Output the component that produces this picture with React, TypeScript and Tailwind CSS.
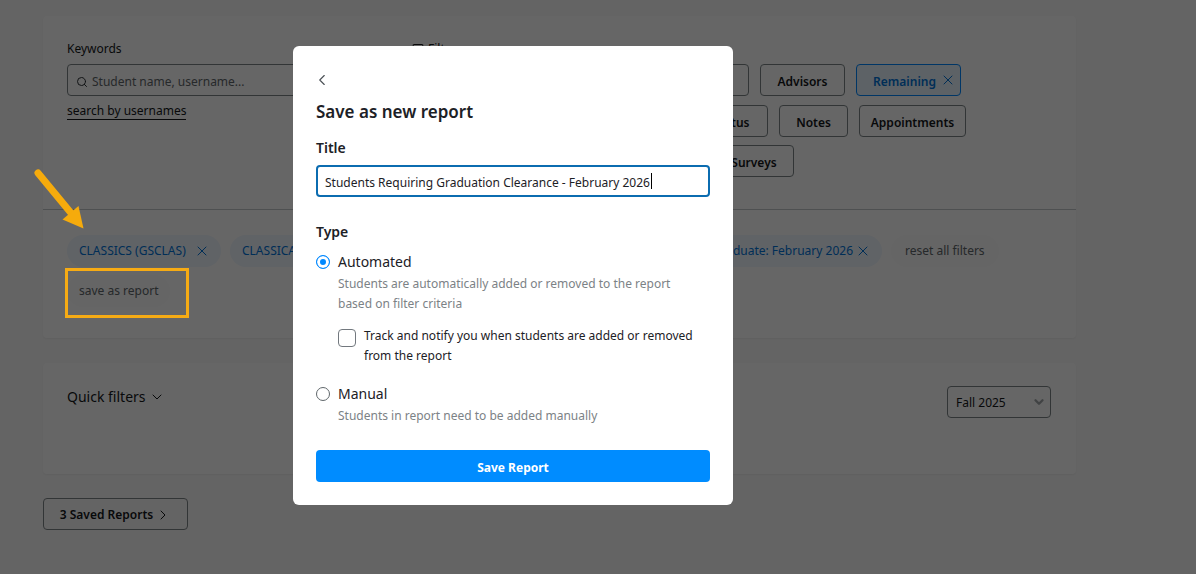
import { useState } from "react";
import { ChevronDown, ChevronLeft, ChevronRight, Filter, Search, X } from "lucide-react";

const filterButton =
  "flex h-8 shrink-0 items-center justify-center rounded border border-[#7d8588] bg-white px-4 pt-1 font-semibold text-[#14171a]";
const chip =
  "flex h-8 shrink-0 items-center gap-[2px] rounded-full bg-[#f0f7ff] pr-[11px] pl-3 whitespace-nowrap text-[#0074d9]";

const Filters = () => {
  return (
    <section className="rounded bg-white shadow-xs">
      <div className="flex h-[194px] gap-6 border-b border-[#c4c8ca] px-6 pt-[23px]">
        <div className="w-[321px] shrink-0">
          <label htmlFor="keywords" className="block leading-5">
            Keywords
          </label>
          <div className="mt-[5px] flex h-8 items-center gap-1 rounded border border-[#7d8588] px-2 pt-1">
            <Search className="size-3 shrink-0 text-[#2c3236]" />
            <input
              id="keywords"
              type="text"
              placeholder="Student name, username..."
              className="w-full bg-transparent outline-none placeholder:text-[#5f676b]"
            />
          </div>
          <a
            href="#usernames"
            className="mt-[7px] inline-block border-b border-[#14171a] leading-4"
          >
            search by usernames
          </a>
        </div>

        <div className="flex flex-col gap-2">
          <div className="-mb-[3px] flex items-center gap-1 leading-5">
            <Filter className="size-3" />
            Filters
          </div>
          <div className="flex gap-[11px] pl-[246px]">
            <button className={`${filterButton} w-[91px]`}>Courses</button>
            <button className={`${filterButton} w-[85px]`}>Advisors</button>
            <button className="flex h-8 w-[105px] items-center justify-center gap-1 rounded border border-[#0088ff] bg-[#e8f4ff] pl-3 font-semibold text-[#0074d9]">
              <span className="pt-1">Remaining</span>
              <X className="size-4" strokeWidth={1.5} />
            </button>
          </div>
          <div className="mt-px flex gap-[11px] pl-[282px]">
            <button className={`${filterButton} w-[74px]`}>Status</button>
            <button className={`${filterButton} w-[69px]`}>Notes</button>
            <button className={`${filterButton} w-[107px]`}>Appointments</button>
          </div>
          <div className="flex gap-[11px] pl-[302px]">
            <button className={`${filterButton} w-[80px]`}>Surveys</button>
          </div>
        </div>
      </div>

      <div className="flex flex-wrap gap-x-[9px] gap-y-2 px-6 pt-[25px] pb-[31px]">
        <button className={`${chip} w-[154px] justify-between`}>
          CLASSICS (GSCLAS)
          <X className="size-4" strokeWidth={1.5} />
        </button>
        <button className={`${chip} w-[330px] justify-between`}>
          CLASSICAL
          <X className="size-4" strokeWidth={1.5} />
        </button>
        <button className={`${chip} w-[313px] justify-end`}>
          Graduate: February 2026
          <X className="size-4" strokeWidth={1.5} />
        </button>
        <button className="h-8 rounded-full bg-[#fcfcfc] px-[14px] text-[#5f676b]">
          reset all filters
        </button>
        <div className="w-full">
          <button className="h-8 rounded-full bg-[#fcfcfc] px-3 text-[#5f676b]">
            save as report
          </button>
        </div>
      </div>
    </section>
  );
};

const QuickFilters = () => {
  return (
    <section className="mt-[25px] flex h-[111px] items-start justify-between rounded bg-white pt-[23px] pr-[25px] pl-6 shadow-xs">
      <button className="flex items-center gap-[3px] text-sm leading-[22px]">
        Quick filters
        <ChevronDown className="size-4" strokeWidth={1.5} />
      </button>
      <div className="relative">
        <select
          aria-label="Term"
          defaultValue="Fall 2025"
          className="h-8 w-[104px] appearance-none rounded border border-[#7d8588] bg-white px-2 pt-[2px]"
        >
          <option>Fall 2025</option>
        </select>
        <ChevronDown
          className="pointer-events-none absolute top-[9px] right-[5px] size-[14px] text-[#a2a7aa]"
          strokeWidth={4}
        />
      </div>
    </section>
  );
};

const SaveReportModal = () => {
  const [title, setTitle] = useState("Students Requiring Graduation Clearance - February 2026");
  const [type, setType] = useState("automated");
  const radio =
    "mt-[5px] size-[14px] shrink-0 appearance-none rounded-full border border-[#60676b] bg-white checked:border-[#0088ff] checked:bg-[#0088ff] checked:shadow-[inset_0_0_0_3px_white]";

  return (
    <div
      role="dialog"
      aria-label="Save as new report"
      className="w-[440px] rounded-md bg-white px-[23px] pt-6 pb-[23px] text-[#1c2126]"
    >
      <button aria-label="Back" className="-ml-[3px] flex h-5 items-center">
        <ChevronLeft className="size-[18px] text-[#4a5055]" strokeWidth={1.5} />
      </button>
      <h1 className="mt-[10px] text-[17px] leading-6 font-semibold">Save as new report</h1>
      <label htmlFor="title" className="mt-3 block text-sm leading-6 font-semibold">
        Title
      </label>
      <div className="relative mt-[5px]">
        <input
          id="title"
          type="text"
          value={title}
          onChange={(e) => setTitle(e.target.value)}
          className="h-8 w-full rounded border-2 border-[#0b6cb0] px-[7px] pt-[2px] outline-none"
        />
        <span className="absolute top-2 left-[335px] h-4 w-px bg-black" />
      </div>

      <fieldset className="mt-[23px]">
        <legend className="text-sm leading-6 font-semibold">Type</legend>
        <div className="mt-[6px] flex gap-2">
          <input
            type="radio"
            id="automated"
            name="type"
            checked={type === "automated"}
            onChange={() => setType("automated")}
            className={radio}
          />
          <div>
            <label htmlFor="automated" className="block text-sm leading-6">
              Automated
            </label>
            <p className="pr-6 leading-5 text-[#7c8286]">
              Students are automatically added or removed to the report based on filter criteria
            </p>
            <div className="mt-3 flex gap-2">
              <input
                type="checkbox"
                id="track"
                className="mt-[3px] size-[18px] shrink-0 appearance-none rounded border border-[#72787e] checked:bg-[#0088ff]"
              />
              <label htmlFor="track" className="leading-5">
                Track and notify you when students are added or removed from the report
              </label>
            </div>
          </div>
        </div>
        <div className="mt-4 flex gap-2">
          <input
            type="radio"
            id="manual"
            name="type"
            checked={type === "manual"}
            onChange={() => setType("manual")}
            className={radio}
          />
          <div>
            <label htmlFor="manual" className="block text-sm leading-6">
              Manual
            </label>
            <p className="leading-5 text-[#7c8286]">Students in report need to be added manually</p>
          </div>
        </div>
      </fieldset>

      <button className="mt-6 h-8 w-full rounded bg-[#008cff] pt-1 font-bold text-white">
        Save Report
      </button>
    </div>
  );
};

const Callouts = () => {
  return (
    <>
      <svg
        className="absolute top-[165px] left-[30px] h-[65px] w-[60px]"
        viewBox="30 165 60 65"
        fill="#f6ab0c"
      >
        <path d="M38 173L71 213" stroke="#f6ab0c" strokeWidth="7" strokeLinecap="round" />
        <path d="M83.500 228.500L62.500 219.500L78.500 206Z" />
      </svg>
      <div className="absolute top-[268px] left-[65px] h-[50px] w-[124px] border-3 border-[#f6ab14]" />
    </>
  );
};

export default function App() {
  return (
    <div className="relative min-h-screen overflow-hidden bg-[#fafafa] font-['Noto_Sans','Open_Sans',sans-serif] text-xs text-[#14171a]">
      <main className="mr-[120px] ml-[43px] pt-4">
        <Filters />
        <QuickFilters />
        <button className="mt-6 flex h-8 w-[145px] items-center justify-center gap-[2px] rounded border border-[#7d8588] pt-[2px] font-semibold">
          3 Saved Reports
          <ChevronRight className="size-4" strokeWidth={1.5} />
        </button>
      </main>

      <div className="absolute inset-0 flex items-start justify-center bg-black/60 pt-[46px] pr-[170px]">
        <SaveReportModal />
      </div>
      <Callouts />
    </div>
  );
}
